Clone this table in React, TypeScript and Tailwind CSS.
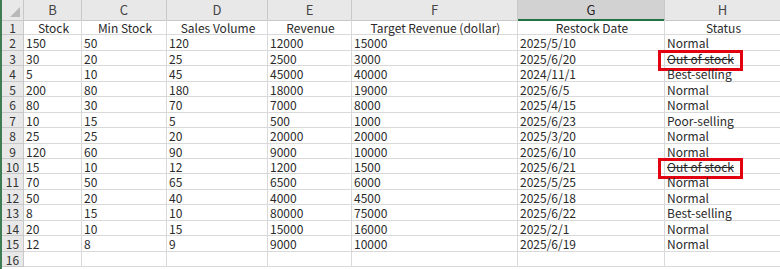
import React from 'react';

type Row = {
  stock: string;
  min: string;
  sales: string;
  revenue: string;
  target: string;
  date: string;
  status: string;
  flagged?: boolean;
};

const rows: Row[] = [
  { stock: '150', min: '50', sales: '120', revenue: '12000', target: '15000', date: '2025/5/10', status: 'Normal' },
  { stock: '30', min: '20', sales: '25', revenue: '2500', target: '3000', date: '2025/6/20', status: 'Out of stock', flagged: true },
  { stock: '5', min: '10', sales: '45', revenue: '45000', target: '40000', date: '2024/11/1', status: 'Best-selling' },
  { stock: '200', min: '80', sales: '180', revenue: '18000', target: '19000', date: '2025/6/5', status: 'Normal' },
  { stock: '80', min: '30', sales: '70', revenue: '7000', target: '8000', date: '2025/4/15', status: 'Normal' },
  { stock: '10', min: '15', sales: '5', revenue: '500', target: '1000', date: '2025/6/23', status: 'Poor-selling' },
  { stock: '25', min: '25', sales: '20', revenue: '20000', target: '20000', date: '2025/3/20', status: 'Normal' },
  { stock: '120', min: '60', sales: '90', revenue: '9000', target: '10000', date: '2025/6/10', status: 'Normal' },
  { stock: '15', min: '10', sales: '12', revenue: '1200', target: '1500', date: '2025/6/21', status: 'Out of stock', flagged: true },
  { stock: '70', min: '50', sales: '65', revenue: '6500', target: '6000', date: '2025/5/25', status: 'Normal' },
  { stock: '50', min: '20', sales: '40', revenue: '4000', target: '4500', date: '2025/6/18', status: 'Normal' },
  { stock: '8', min: '15', sales: '10', revenue: '80000', target: '75000', date: '2025/6/22', status: 'Best-selling' },
  { stock: '20', min: '10', sales: '15', revenue: '15000', target: '16000', date: '2025/2/1', status: 'Normal' },
  { stock: '12', min: '8', sales: '9', revenue: '9000', target: '10000', date: '2025/6/19', status: 'Normal' },
];

const columns = ['B', 'C', 'D', 'E', 'F', 'G', 'H'];
const titles = ['Stock', 'Min Stock', 'Sales Volume', 'Revenue', 'Target Revenue (dollar)', 'Restock Date', 'Status'];

const gridCols = 'grid grid-cols-[22px_58px_85px_101px_84px_166px_147px_116px]';
const cell = 'h-[15.45px] border-r border-b border-[#d9d9d9] pl-[2px] pt-[1px] leading-[14px] whitespace-nowrap overflow-visible';
const rowHead = 'h-[15.45px] border-r border-b border-[#c8c8c8] bg-[#e8e8e8] pt-[1px] text-center text-[12px] leading-[14px] text-[#333]';

export default function App() {
  return (
    <div className="w-[780px] h-[269px] overflow-hidden bg-white border-l-2 border-[#3f7d55] font-['Noto_Sans_CJK_SC','Noto_Sans',sans-serif] text-[12px] text-[#2a2a2a]">
      {/* column letters */}
      <div className={`${gridCols} h-[20px] bg-[#e8e8e8] text-[13px] text-[#444]`}>
        <div className="relative border-r border-b border-[#c8c8c8]">
          <div className="absolute right-[3px] bottom-[3px] w-0 h-0 border-l-[10px] border-l-transparent border-b-[10px] border-b-[#b9b9b9]" />
        </div>
        {columns.map((c) => (
          <div
            key={c}
            className={
              c === 'G'
                ? 'border-r border-b-2 border-r-[#c8c8c8] border-b-[#217346] bg-[#d2d2d2] text-center leading-[19px] text-[#222]'
                : 'border-r border-b border-[#c8c8c8] text-center leading-[19px]'
            }
          >
            {c}
          </div>
        ))}
      </div>

      {/* header row */}
      <div className={gridCols}>
        <div className={rowHead}>1</div>
        {titles.map((t) => (
          <div key={t} className={`${cell} text-center`}>
            {t}
          </div>
        ))}
      </div>

      {rows.map((r, i) => (
        <div key={i} className={gridCols}>
          <div className={rowHead}>{i + 2}</div>
          <div className={cell}>{r.stock}</div>
          <div className={cell}>{r.min}</div>
          <div className={cell}>{r.sales}</div>
          <div className={cell}>{r.revenue}</div>
          <div className={cell}>{r.target}</div>
          <div className={cell}>{r.date}</div>
          <div className={`${cell} relative`}>
            <span className={r.flagged ? 'line-through' : ''}>{r.status}</span>
            {r.flagged && (
              <div className="absolute left-[-7px] top-[-1px] w-[85px] h-[21px] border-[3px] border-[#e3000f]" />
            )}
          </div>
        </div>
      ))}

      <div className={gridCols}>
        <div className={rowHead}>16</div>
        {columns.map((c) => (
          <div key={c} className={cell} />
        ))}
      </div>
    </div>
  );
}
